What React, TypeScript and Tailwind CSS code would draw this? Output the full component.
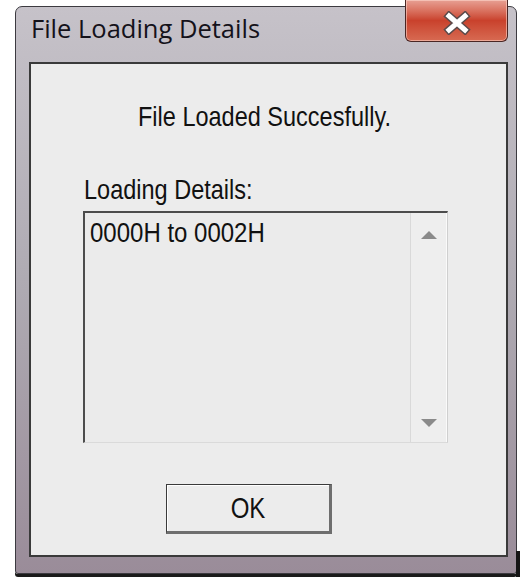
import { useState } from 'react';

const dialogFont = "font-['Liberation_Sans',Arial,sans-serif]";

function Tall({ children }: { children: string }) {
  return <span className="inline-block scale-y-[1.15]">{children}</span>;
}

function CloseButton() {
  return (
    <button className="-mt-[7px] flex h-[42px] w-[103px] items-center justify-center rounded-b-[6px] border border-t-0 border-[#4a2624] bg-gradient-to-b from-[#e7a094] via-[#c9412c] to-[#d76a52] shadow-[inset_0_0_0_1px_rgba(255,220,210,0.55)]">
      <svg width="30" height="24" viewBox="0 0 30 24" className="mt-[4px]">
        <path d="M7 5 L23 19 M23 5 L7 19" stroke="#5b4a4a" strokeWidth="8" strokeLinecap="square" />
        <path d="M7 5 L23 19 M23 5 L7 19" stroke="#ffffff" strokeWidth="5" strokeLinecap="square" />
      </svg>
    </button>
  );
}

function ListBox({ items }: { items: string[] }) {
  return (
    <div className="ml-[52px] mt-[9px] flex h-[232px] w-[365px] border-l-2 border-t-2 border-b border-r border-l-[#4c4c4c] border-t-[#4c4c4c] border-b-[#dadada] border-r-[#cfcfcf] bg-[#ebebeb]">
      <div className={`flex-1 pl-[5px] pt-[8px] text-[24px] leading-none text-[#111] ${dialogFont}`}>
        {items.map((item) => (
          <div key={item}>
            <Tall>{item}</Tall>
          </div>
        ))}
      </div>
      <div className="flex w-[37px] flex-col items-center justify-between border-l border-r border-l-[#d9d9d9] border-r-[#fafafa] bg-[#eeeeee] pb-[15px] pt-[18px]">
        <svg width="16" height="8" viewBox="0 0 16 8">
          <polygon points="8,0 16,8 0,8" fill="#8a8a8a" />
        </svg>
        <svg width="16" height="8" viewBox="0 0 16 8">
          <polygon points="0,0 16,0 8,8" fill="#8a8a8a" />
        </svg>
      </div>
    </div>
  );
}

export default function App() {
  const [details] = useState(['0000H to 0002H']);

  return (
    <div className="h-[588px] w-[532px] bg-white pl-[15px] pt-[6px]">
      <div className="relative flex h-[568px] w-[502px] flex-col rounded-t-[7px] rounded-b-[3px] border border-[#3c3a40] bg-gradient-to-b from-[#c6c2c9] via-[#aeaab2] to-[#9a8c99] pb-[16px] pl-[13px] pr-[8px] shadow-[0_3px_0_#1a1a1a]">
        {/* title bar */}
        <div className="flex h-[55px] items-start justify-between">
          <h1 className="pl-[2px] pt-[9px] font-['Open_Sans',sans-serif] text-[25.5px] leading-none text-[#14121a]">
            File Loading Details
          </h1>
          <CloseButton />
        </div>

        {/* client area */}
        <div className="flex flex-1 flex-col border-2 border-[#3a3a3a] bg-[#ececec]">
          <div className={`pr-[8px] pt-[42px] text-center text-[23.5px] leading-none text-[#111] ${dialogFont}`}>
            <Tall>File Loaded Succesfully.</Tall>
          </div>

          <div className={`ml-[53px] mt-[49px] text-[23.5px] leading-none text-[#111] ${dialogFont}`}>
            <Tall>Loading Details:</Tall>
          </div>

          <ListBox items={details} />

          <button
            className={`ml-[135px] mt-[41px] flex h-[50px] w-[166px] items-center justify-center border border-b-[3px] border-r-[3px] border-[#3a3a3a] border-b-[#6e6e6e] border-r-[#6e6e6e] bg-[#ececec] text-[24px] leading-none text-[#111] shadow-[inset_1px_1px_0_#ffffff] ${dialogFont}`}
          >
            <span className="inline-block scale-y-[1.25]">OK</span>
          </button>
        </div>

        <div className="absolute -bottom-[4px] -right-[4px] h-[26px] w-[4px] bg-[#151515]" />
      </div>
    </div>
  );
}
